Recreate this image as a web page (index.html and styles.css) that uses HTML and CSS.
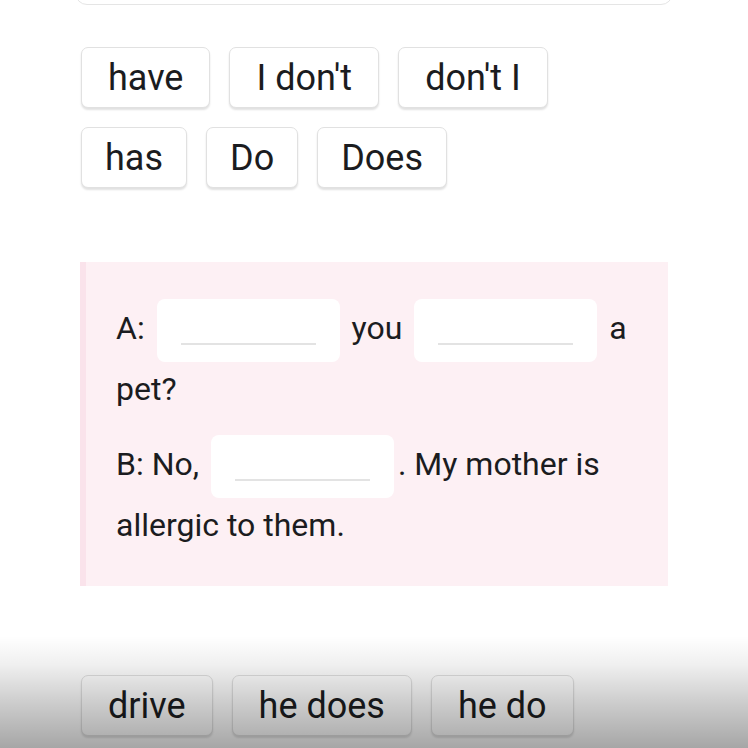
FILE: index.html
```html
<!DOCTYPE html>
<html lang="en">
<head>
<meta charset="utf-8">
<title>Fill in the blanks</title>
<link rel="stylesheet" href="styles.css">
</head>
<body>
<div class="page">
  <div class="card-top"></div>

  <div class="bank">
    <div class="bank-row">
      <div class="chip">have</div>
      <div class="chip">I don't</div>
      <div class="chip">don't I</div>
    </div>
    <div class="bank-row bank-row-tight">
      <div class="chip">has</div>
      <div class="chip">Do</div>
      <div class="chip">Does</div>
    </div>
  </div>

  <div class="panel">
    <p class="line">A: <span class="blank"></span> you <span class="blank"></span> a pet?</p>
    <p class="line">B: No, <span class="blank"></span>. My mother is allergic to them.</p>
  </div>

  <div class="bank bank-bottom">
    <div class="bank-row">
      <div class="chip">drive</div>
      <div class="chip">he does</div>
      <div class="chip">he do</div>
    </div>
  </div>

  <div class="shade"></div>
</div>
</body>
</html>
```

FILE: styles.css
```css
html, body {
  margin: 0;
  padding: 0;
  background: #ffffff;
}

body {
  font-family: Roboto, "Liberation Sans", sans-serif;
  color: #1b1c20;
}

.page {
  position: relative;
  width: 748px;
  height: 748px;
  overflow: hidden;
}

.card-top {
  margin: -30px 75px 0;
  height: 33px;
  border: 1.5px solid #e5e5e5;
  border-radius: 12px;
  background: #ffffff;
}

.bank {
  margin: 42px 0 0 81px;
  display: flex;
  flex-direction: column;
  gap: 19px;
}

.bank-row {
  display: flex;
  gap: 19px;
}

.chip {
  box-sizing: border-box;
  height: 61px;
  padding: 0 26px;
  display: flex;
  align-items: center;
  font-size: 36px;
  line-height: 1;
  background: #ffffff;
  border: 1px solid #e1e1e1;
  border-radius: 7px;
  box-shadow: 0 2px 2px rgba(0, 0, 0, 0.12);
}

.bank-row-tight .chip {
  padding: 0 23px;
}

.panel {
  margin: 74px 80px 0;
  background: #fdf0f4;
  border-left: 6px solid #fae3eb;
  padding: 37px 28px 34px 30px;
}

.line {
  margin: 0;
  font-size: 32px;
  line-height: 54px;
}

.line + .line {
  margin-top: 19px;
}

.blank {
  position: relative;
  display: inline-block;
  width: 183px;
  height: 63px;
  margin: 0 4px;
  background: #ffffff;
  border-radius: 8px;
  vertical-align: middle;
}

.blank::after {
  content: "";
  position: absolute;
  left: 24px;
  right: 24px;
  bottom: 17px;
  height: 2px;
  background: #e3e3e3;
}

.bank-bottom {
  margin-top: 89px;
}

.shade {
  position: absolute;
  left: 0;
  right: 0;
  bottom: 0;
  height: 112px;
  pointer-events: none;
  background: linear-gradient(to bottom,
    rgba(0, 0, 0, 0) 0%,
    rgba(0, 0, 0, 0.06) 25%,
    rgba(0, 0, 0, 0.2) 60%,
    rgba(0, 0, 0, 0.35) 100%);
}
```
